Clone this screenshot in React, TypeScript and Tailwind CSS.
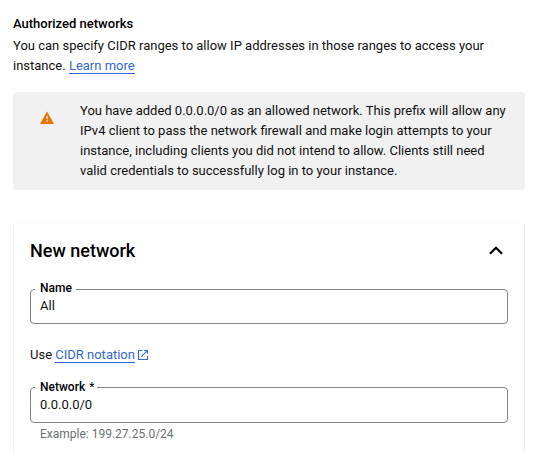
import type { ReactNode } from "react";

function Field({ label, value, notch, box, required }: { label: string; value: string; notch: string; box: string; required?: boolean }) {
  return (
    <fieldset className={`${box} min-w-0 rounded border border-[#80868b] pl-1`}>
      <legend className={`${notch} h-3 pl-[5px] text-[12px] font-medium whitespace-nowrap text-black`}>
        {label}{required && <span className="ml-px font-normal"> *</span>}
      </legend>
      <div className="pl-[5px] text-[13px] leading-4">{value}</div>
    </fieldset>
  );
}

function Link({ children }: { children: ReactNode }) {
  return <a className="border-b border-[#3367d6] text-[#3367d6]">{children}</a>;
}

export default function App() {
  return (
    <main className="h-[453px] w-[542px] overflow-hidden bg-white px-[13px] pt-[14px] font-[Roboto,sans-serif] text-[13px] leading-5 text-[#111111]">
      <h2 className="font-medium text-black">Authorized networks</h2>
      <p className="mt-[2px] w-[512px]">You can specify CIDR ranges to allow IP addresses in those ranges to access your<br />instance. <Link>Learn more</Link></p>
      <section className="mt-4 flex h-[98px] w-[512px] rounded bg-[#f1f1f1] pt-[9px]">
        <svg className="mt-[9px] ml-[26px] h-4 w-4 shrink-0" viewBox="0 0 16 16">
          <path fill="#e37400" d="M8 1.5 15 14H1z" />
          <path fill="#f8dfc5" d="M7.4 6h1.4v3.2H7.4zm0 4.3h1.4v1.4H7.4z" />
        </svg>
        <p className="ml-[25px] whitespace-nowrap">You have added 0.0.0.0/0 as an allowed network. This prefix will allow any<br />IPv4 client to pass the network firewall and make login attempts to your<br />instance, including clients you did not intend to allow. Clients still need<br />valid credentials to successfully log in to your instance.</p>
      </section>
      <section className="mt-8 h-[260px] w-[512px] rounded border border-[#f0f0f0] border-t-[#fafafa] px-4">
        <header className="flex h-[60px] items-center justify-between pr-0.5 pb-[5px]">
          <h3 className="text-[18px] font-medium text-black">New network</h3>
          <svg className="h-5 w-5" viewBox="0 0 20 20"><path d="m4 12.7 6-6 6 6" fill="none" stroke="#000" strokeWidth="2.2" /></svg>
        </header>
        <Field label="Name" value="All" notch="w-[41px] leading-[10px]" box="h-[41px] [&>div]:pt-[3px]" />
        <div className="mt-[21px] flex h-5 items-center">
          <span>Use <Link>CIDR notation</Link></span>
          <svg className="ml-[3px] h-[10px] w-[10px]" viewBox="0 0 11 11" fill="none" stroke="#3367d6" strokeWidth="1.2"><path d="M4.8.6H.6v9.8h9.8V6.2M6.8.6h3.6v3.6M10.2.8 3.6 7.4" /></svg>
        </div>
        <div className="mt-4"><Field label="Network" required value="0.0.0.0/0" notch="w-[62px] leading-3" box="h-[42px] [&>div]:pt-1" /></div>
        <p className="mt-px pl-[10px] text-[12px] text-[#6b6f73]">Example: 199.27.25.0/24</p>
      </section>
    </main>
  );
}
